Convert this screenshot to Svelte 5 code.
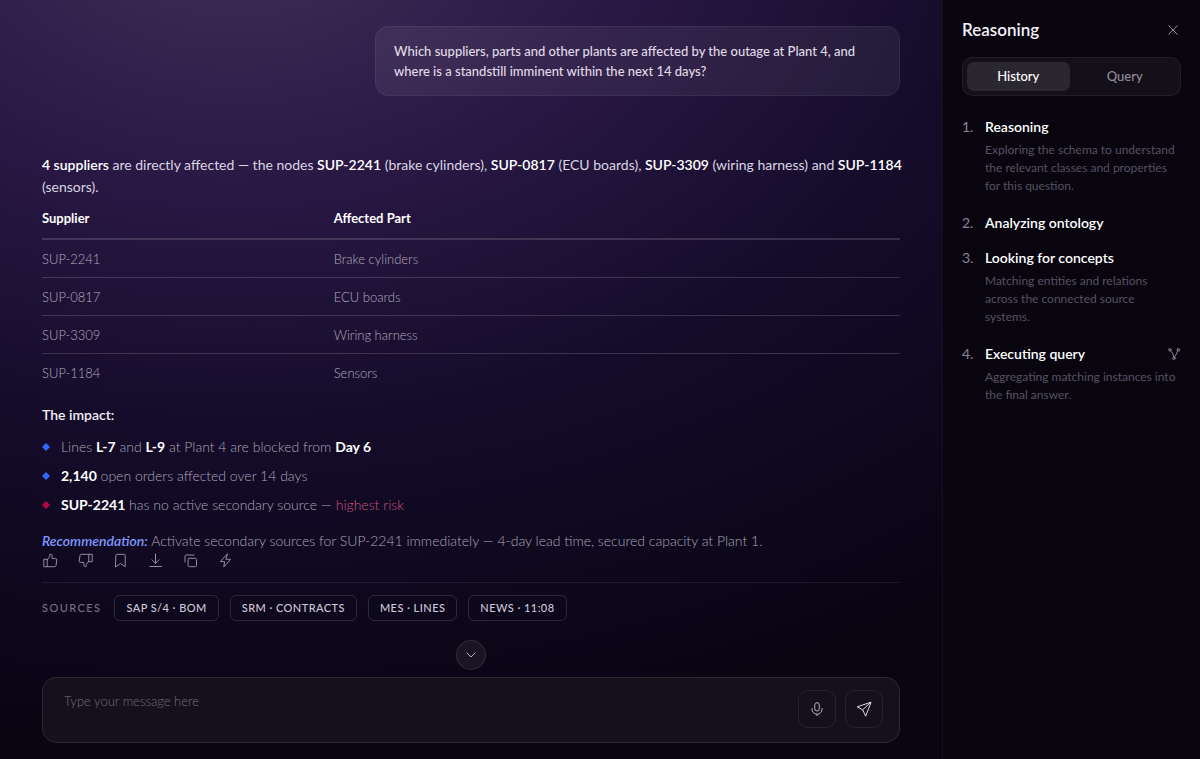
<script lang="ts">
	const suppliers = [
		{ id: 'SUP-2241', part: 'Brake cylinders' },
		{ id: 'SUP-0817', part: 'ECU boards' },
		{ id: 'SUP-3309', part: 'Wiring harness' },
		{ id: 'SUP-1184', part: 'Sensors' }
	];

	const sources = ['SAP S/4 · BOM', 'SRM · CONTRACTS', 'MES · LINES', 'NEWS · 11:08'];

	const actions = [
		{ label: 'Helpful', path: 'M1.2 6.3h3v7.4h-3zM4.2 6.8 6.6 3.6 7 1.3c1.3-.2 2.2.6 2.2 1.7v2.6h3.5c.7 0 1.2.6 1.1 1.3l-.8 5.6c-.1.7-.6 1.2-1.3 1.2H4.2' },
		{ label: 'Not helpful', path: 'M13.8 8.7h-3V1.3h3zM10.8 8.2l-2.4 3.2-.4 2.3c-1.3.2-2.2-.6-2.2-1.7V9.4H2.3c-.7 0-1.2-.6-1.1-1.3L2 2.5c.1-.7.6-1.2 1.3-1.2h7.5' },
		{ label: 'Bookmark', path: 'M2.8 2.3c0-.6.4-1 1-1h7.4c.6 0 1 .4 1 1v11.4L7.5 10.5l-4.7 3.2z' },
		{ label: 'Download', path: 'M7.5 1v9M4 6.8l3.5 3.5L11 6.8M2 13.5h11.5' },
		{ label: 'Copy', path: 'M6.3 5.3h6c.7 0 1.2.5 1.2 1.2v6c0 .7-.5 1.2-1.2 1.2h-6c-.7 0-1.2-.5-1.2-1.2v-6c0-.7.5-1.2 1.2-1.2zM2 9V3.2C2 2.5 2.5 2 3.2 2H11' },
		{ label: 'Run action', path: 'M9.2 1 2.4 8.6h4.2L5.8 14l6.8-7.7H8.3z' }
	];

	const steps = [
		{ title: 'Reasoning', text: 'Exploring the schema to understand the relevant classes and properties for this question.' },
		{ title: 'Analyzing ontology' },
		{ title: 'Looking for concepts', text: 'Matching entities and relations across the connected source systems.' },
		{ title: 'Executing query', text: 'Aggregating matching instances into the final answer.', graph: true }
	];

	let tab = 'history';
	let message = '';
</script>

<svelte:head>
	<title>Reasoning</title>
</svelte:head>

<div class="app">
	<main>
		<div class="question">
			Which suppliers, parts and other plants are affected by the outage at Plant 4, and where is a
			standstill imminent within the next 14 days?
		</div>

		<article>
			<p class="lead">
				<strong>4 suppliers</strong> are directly affected — the nodes <strong>SUP-2241</strong> (brake
				cylinders), <strong>SUP-0817</strong> (ECU boards), <strong>SUP-3309</strong> (wiring harness)
				and <strong>SUP-1184</strong> (sensors).
			</p>

			<table>
				<thead>
					<tr><th>Supplier</th><th>Affected Part</th></tr>
				</thead>
				<tbody>
					{#each suppliers as supplier}
						<tr><td>{supplier.id}</td><td>{supplier.part}</td></tr>
					{/each}
				</tbody>
			</table>

			<h2>The impact:</h2>
			<ul class="impact">
				<li>Lines <strong>L-7</strong> and <strong>L-9</strong> at Plant 4 are blocked from <strong>Day 6</strong></li>
				<li><strong>2,140</strong> open orders affected over 14 days</li>
				<li class="risk"><strong>SUP-2241</strong> has no active secondary source — <span>highest risk</span></li>
			</ul>

			<p class="recommendation">
				<em>Recommendation:</em> Activate secondary sources for SUP-2241 immediately — 4-day lead time,
				secured capacity at Plant 1.
			</p>

			<div class="actions">
				{#each actions as action}
					<button type="button" aria-label={action.label}>
						<svg viewBox="0 0 15 15" width="15" height="15"><path d={action.path} /></svg>
					</button>
				{/each}
			</div>
		</article>

		<div class="sources">
			<span>SOURCES</span>
			{#each sources as source}
				<button type="button">{source}</button>
			{/each}
		</div>

		<button class="scroll" type="button" aria-label="Scroll to bottom">
			<svg viewBox="0 0 10 10" width="10" height="10"><path d="M1 3l4 4 4-4" /></svg>
		</button>

		<form class="composer" on:submit|preventDefault>
			<textarea aria-label="Message" placeholder="Type your message here" rows="1" bind:value={message}></textarea>
			<button type="button" aria-label="Dictate">
				<svg viewBox="0 0 14 14" width="14" height="14">
					<rect x="4.7" y="0.7" width="4.6" height="8.3" rx="2.3" />
					<path d="M2 6.5v.7a5 5 0 0 0 10 0v-.7M7 12.2v1.5" />
				</svg>
			</button>
			<button type="submit" aria-label="Send">
				<svg class="send" viewBox="0 0 16 16" width="16" height="16">
					<path d="M14.7 1.3 1.2 5.8l5.5 3 2.8 6zM14.7 1.3l-8 7.5" />
				</svg>
			</button>
		</form>
	</main>

	<aside>
		<header>
			<h1>Reasoning</h1>
			<button type="button" aria-label="Close">
				<svg viewBox="0 0 10 10" width="10" height="10"><path d="M.7.7l8.6 8.6M9.3.7.7 9.3" /></svg>
			</button>
		</header>

		<div class="tabs">
			<button type="button" class:active={tab === 'history'} on:click={() => (tab = 'history')}>History</button>
			<button type="button" class:active={tab === 'query'} on:click={() => (tab = 'query')}>Query</button>
		</div>

		<ol>
			{#each steps as step, i}
				<li>
					<span class="number">{i + 1}.</span>
					<div class="step">
						<h3>{step.title}</h3>
						{#if step.text}
							<p>{step.text}</p>
						{/if}
					</div>
					{#if step.graph}
						<button type="button" aria-label="Show graph">
							<svg viewBox="0 0 12 12" width="12" height="12">
								<circle cx="1.8" cy="1.8" r="1.2" />
								<circle cx="10.2" cy="1.8" r="1.2" />
								<circle cx="6" cy="10.2" r="1.2" />
								<path d="M2.6 2.8C4.4 4.6 5.3 6 5.7 9M9.6 2.9C9 5.5 7.8 7 6.4 9" />
							</svg>
						</button>
					{/if}
				</li>
			{/each}
		</ol>
	</aside>
</div>

<style>
	:global(body) {
		margin: 0;
		background: #080510;
	}

	.app {
		display: flex;
		min-height: 100vh;
		font-family: Lato, "Liberation Sans", sans-serif;
		font-size: 14px;
		line-height: 22px;
		color: #dad5e3;
	}

	button {
		display: flex;
		align-items: center;
		justify-content: center;
		padding: 0;
		border: 0;
		background: none;
		color: inherit;
		font: inherit;
		cursor: pointer;
	}

	svg {
		fill: none;
		stroke: currentColor;
		stroke-width: 1;
		stroke-linecap: round;
		stroke-linejoin: round;
	}

	h1, h2, h3, p, ul, ol {
		margin: 0;
		padding: 0;
	}

	strong {
		color: #fff;
		font-weight: 700;
		white-space: nowrap;
	}

	main {
		display: flex;
		flex: 1;
		flex-direction: column;
		box-sizing: border-box;
		min-width: 0;
		padding: 26px 42px 16px;
		background: radial-gradient(ellipse 120% 100% at 25% -10%, #423059 0%, #2b1946 32%, #150c2b 65%, #090513 108%);
	}

	.question {
		align-self: flex-end;
		box-sizing: border-box;
		width: 525px;
		max-width: 100%;
		padding: 14px 18px;
		border: 1px solid rgba(255, 255, 255, 0.06);
		border-radius: 14px;
		background: rgba(255, 255, 255, 0.06);
		color: #e0dbe7;
		font-size: 13px;
		font-weight: 500;
		line-height: 20px;
	}

	article {
		margin-top: 58px;
	}

	.lead {
		margin-right: -8px;
	}

	.lead strong {
		font-weight: 600;
	}

	table {
		width: 100%;
		border-collapse: collapse;
		table-layout: fixed;
		font-size: 13px;
	}

	th, td {
		padding: 0;
		text-align: left;
	}

	th {
		height: 40px;
		border-bottom: 2px solid rgba(255, 255, 255, 0.15);
		color: #fff;
		font-weight: 700;
	}

	th:first-child {
		width: 34%;
	}

	td {
		height: 37px;
		border-bottom: 1px solid rgba(255, 255, 255, 0.16);
		color: #b0aabc;
		font-weight: 300;
	}

	tr:last-child td {
		border-bottom: 0;
	}

	h2 {
		margin-top: 13px;
		color: #f1eef5;
		font-size: 14px;
		font-weight: 600;
	}

	.impact {
		display: flex;
		flex-direction: column;
		gap: 7px;
		margin-top: 10px;
		list-style: none;
	}

	.impact li {
		display: flex;
		align-items: center;
		white-space: pre-wrap;
		color: #aba5b7;
		font-weight: 300;
	}

	.impact li::before {
		content: "";
		width: 8px;
		height: 8px;
		margin-right: 11px;
		background: #3366ff;
		clip-path: polygon(50% 0, 100% 50%, 50% 100%, 0 50%);
	}

	.impact .risk::before {
		background: #b00843;
	}

	.risk span {
		color: #cc547b;
	}

	.recommendation {
		margin-top: 14px;
		color: #aba5b7;
		font-weight: 300;
	}

	em {
		color: #7f98ff;
		font-weight: 600;
	}

	.actions {
		display: flex;
		gap: 20px;
		margin-top: 1px;
		padding-left: 1px;
		color: #938d9f;
	}

	.sources {
		display: flex;
		flex-wrap: wrap;
		align-items: center;
		gap: 11px;
		margin-top: 14px;
		padding-top: 12px;
		border-top: 1px solid rgba(255, 255, 255, 0.08);
		color: #777183;
		font-size: 11px;
		font-weight: 500;
		line-height: 24px;
	}

	.sources span {
		margin-right: 2px;
		letter-spacing: 0.13em;
	}

	.sources button {
		padding: 0 11px;
		border: 1px solid rgba(255, 255, 255, 0.13);
		border-radius: 6px;
		color: #cdc8d6;
		letter-spacing: 0.04em;
	}

	.scroll {
		align-self: center;
		width: 30px;
		height: 30px;
		margin-top: auto;
		border: 1px solid rgba(255, 255, 255, 0.1);
		border-radius: 50%;
		background: #1a1524;
		color: #b3adbf;
	}

	.composer {
		display: flex;
		align-items: flex-start;
		gap: 9px;
		margin-top: 7px;
		padding: 12px 16px 14px 21px;
		border: 1px solid rgba(255, 255, 255, 0.1);
		border-radius: 15px;
		background: #15111c;
	}

	textarea {
		flex: 1;
		min-width: 0;
		padding: 0;
		border: 0;
		outline: 0;
		background: none;
		color: #d5d0df;
		font: inherit;
		font-size: 13px;
		resize: none;
	}

	textarea::placeholder {
		color: #716c7c;
		font-weight: 300;
	}

	.composer button {
		box-sizing: border-box;
		width: 38px;
		height: 38px;
		border: 1px solid rgba(255, 255, 255, 0.08);
		border-radius: 10px;
		color: #b3adbf;
	}

	.composer .send {
		color: #ddd9e5;
	}

	aside {
		box-sizing: border-box;
		width: 258px;
		padding: 18px 19px;
		border-left: 1px solid #15101f;
		background: #08050f;
	}

	header {
		display: flex;
		align-items: center;
		justify-content: space-between;
		padding-right: 3px;
	}

	header button {
		color: #918b9d;
	}

	h1 {
		color: #f4f1f8;
		font-size: 17px;
		font-weight: 600;
		line-height: 24px;
	}

	.tabs {
		display: grid;
		grid-template-columns: 1fr 1fr;
		gap: 4px;
		margin-top: 15px;
		padding: 4px;
		border: 1px solid rgba(255, 255, 255, 0.06);
		border-radius: 10px;
		background: #131019;
		color: #8f899b;
		font-size: 13px;
		font-weight: 500;
		line-height: 29px;
	}

	.tabs button {
		border-radius: 7px;
	}

	.tabs .active {
		background: #2a2730;
		color: #fff;
	}

	ol {
		display: flex;
		flex-direction: column;
		gap: 13px;
		margin-top: 20px;
		list-style: none;
	}

	li {
		display: flex;
		align-items: flex-start;
	}

	.number {
		width: 23px;
		color: #8a8496;
	}

	.step {
		flex: 1;
		min-width: 0;
	}

	h3 {
		color: #fff;
		font-size: 14px;
		font-weight: 600;
		line-height: 22px;
	}

	.step p {
		margin: 3px 0 4px;
		color: #575162;
		font-size: 12px;
		line-height: 18px;
	}

	li button {
		width: 14px;
		height: 22px;
		margin-left: -14px;
		color: #918b9d;
	}
</style>
